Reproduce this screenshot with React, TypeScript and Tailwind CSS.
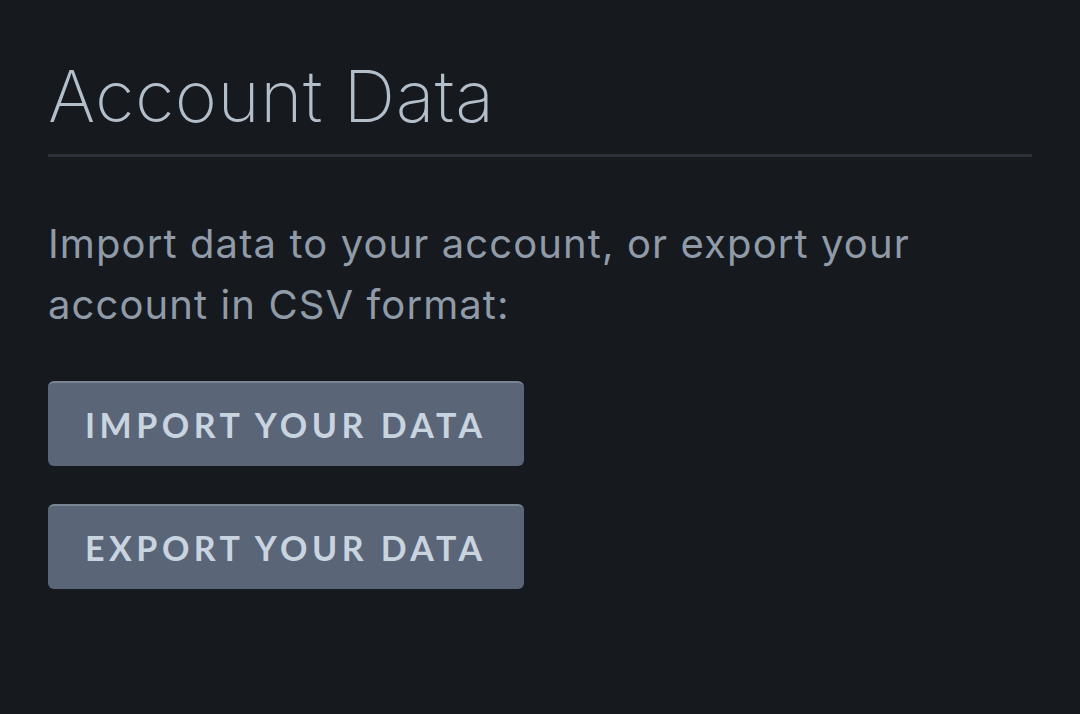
export default function App() {
  return (
    <div className="min-h-[714px] bg-[#16191e] px-12 pt-[50px] font-['Inter',sans-serif]">
      <h1 className="text-[72px] font-extralight leading-[92px] tracking-[0.5px] text-[#b3becb]">Account Data</h1>
      <div className="mt-[12px] h-[3px] w-[984px] bg-[#2c3039]" />
      <p className="mt-[56px] w-[900px] text-[40px] leading-[61px] tracking-[1.1px] text-[#909baa]">
        Import data to your account, or export your account in CSV format:
      </p>
      <div className="mt-[46px] flex flex-col items-start gap-[38px]">
        <button className="h-[85px] rounded-[6px] border-t-2 border-[#7a8594] bg-[#5a6677] px-[37px] font-['Lato',sans-serif] text-[34px] font-bold tracking-[4.5px] text-[#c9d4e1]">
          IMPORT YOUR DATA
        </button>
        <button className="h-[85px] rounded-[6px] border-t-2 border-[#7a8594] bg-[#5a6677] px-[37px] font-['Lato',sans-serif] text-[34px] font-bold tracking-[4.5px] text-[#c9d4e1]">
          EXPORT YOUR DATA
        </button>
      </div>
    </div>
  )
}
